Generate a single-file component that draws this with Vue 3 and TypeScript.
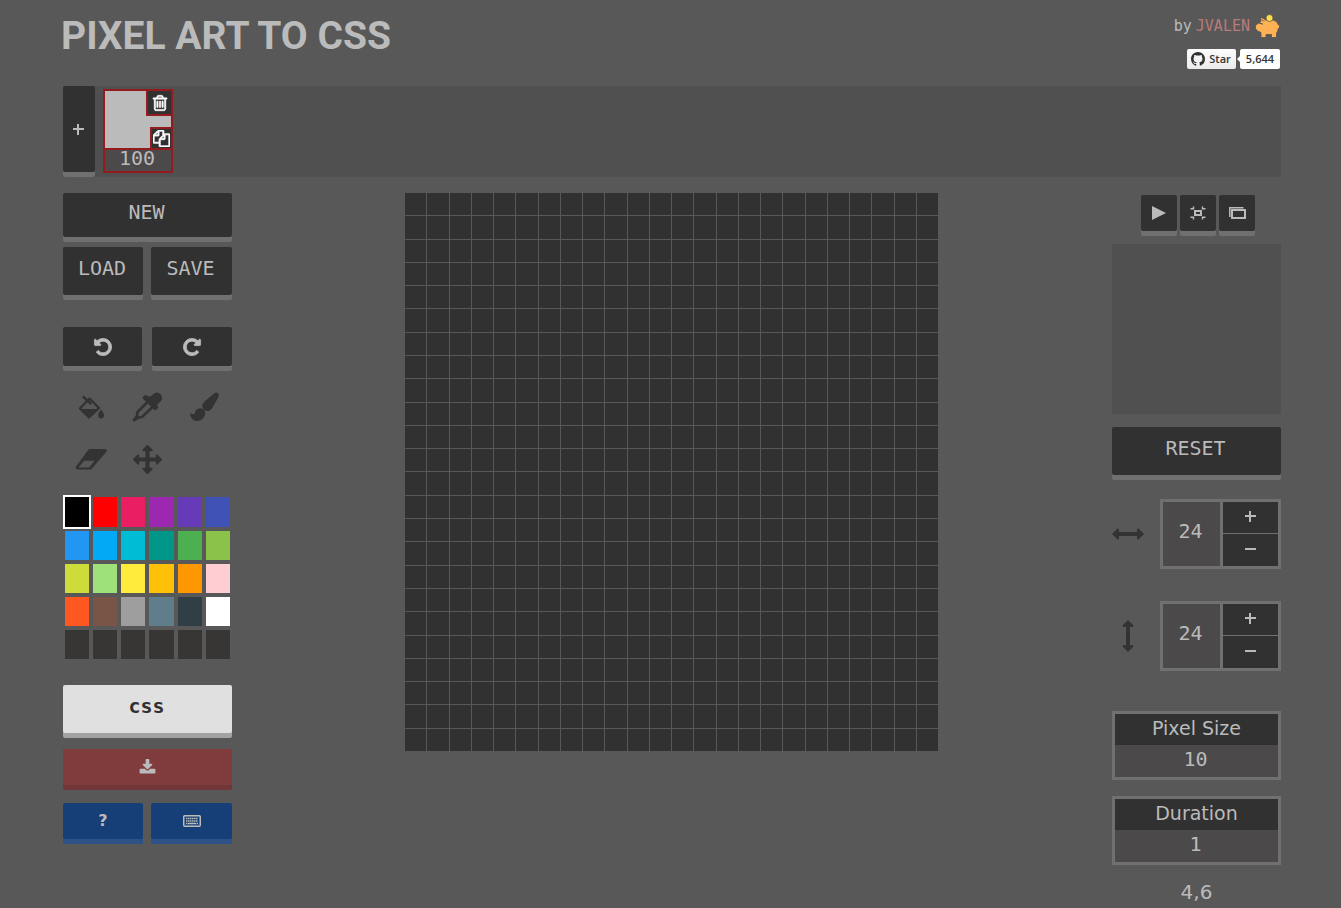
<script setup lang="ts">
import { ref } from 'vue'

const palette: string[] = [
  '#000000', '#ff0000', '#e91e63', '#9c27b0', '#673ab7', '#3f51b5',
  '#2196f3', '#03a9f4', '#00bcd4', '#009688', '#4caf50', '#8bc34a',
  '#cddc39', '#9ee07a', '#ffeb3b', '#ffc107', '#ff9800', '#ffcdd2',
  '#ff5722', '#795548', '#9e9e9e', '#607d8b', '#303f46', '#ffffff',
  '#383535', '#383535', '#383535', '#383535', '#383535', '#383535',
]
const selected = ref(0)
const columns = ref(24)
const rows = ref(24)
const pixelSize = ref('10')
const duration = ref('1')
const interval = ref('100')
</script>

<template>
  <div class="page">
    <header class="header">
      <h1>PIXEL ART TO CSS</h1>
      <div class="credits">
        <p class="author">
          <span>by</span>
          <a href="#jvalen">JVALEN</a>
          <svg class="piggy" viewBox="0 0 26 24" aria-hidden="true">
            <path d="M1.500 11.500L4 9.500 7 7.500 6.500 3.500Q10 4 11.500 6H19Q23.500 7 24.300 11l1.200-.8V14l-1.300.5q-.2 3-1.700 4.500V23.500H17.500V20.500H12V23.500H7V18.500L3.500 17 1.500 14.500z" fill="#ffb156" stroke="#4c4c4c" stroke-width="0.700" />
            <path d="M5 9l4 1.200M8 5.500l2 2" stroke="#4c4c4c" stroke-width="1" fill="none" />
            <circle cx="15.500" cy="4" r="3.500" fill="#ffdc4a" stroke="#4c4c4c" stroke-width="0.700" />
          </svg>
        </p>
        <div class="github">
          <a class="star" href="#star">
            <svg viewBox="0 0 16 16" aria-hidden="true"><path fill="#333" d="M8 0C3.580 0 0 3.580 0 8c0 3.540 2.290 6.530 5.470 7.590.4.070.55-.17.55-.38 0-.19-.01-.82-.01-1.490-2.010.37-2.530-.49-2.690-.94-.09-.23-.48-.94-.82-1.130-.28-.15-.68-.52-.01-.53.63-.01 1.080.58 1.230.82.72 1.210 1.870.87 2.330.66.07-.52.28-.87.51-1.070-1.780-.2-3.640-.89-3.640-3.950 0-.87.31-1.590.82-2.150-.08-.2-.36-1.020.08-2.120 0 0 .67-.21 2.200.82.64-.18 1.320-.27 2-.27.68 0 1.360.09 2 .27 1.530-1.040 2.200-.82 2.200-.82.44 1.100.16 1.920.08 2.120.51.56.82 1.270.82 2.150 0 3.070-1.870 3.750-3.650 3.950.29.25.54.73.54 1.480 0 1.070-.01 1.930-.01 2.200 0 .21.15.46.55.38A8.013 8.013 0 0016 8c0-4.420-3.580-8-8-8z" /></svg>
            Star
          </a>
          <a class="count" href="#stargazers">5,644</a>
        </div>
      </div>
    </header>

    <section class="frames" aria-label="Frames">
      <button class="btn add" type="button" aria-label="Add frame">
        <svg width="11" height="11" viewBox="0 0 11 11"><path d="M5 0v11M0 5h11" stroke="currentColor" stroke-width="2" /></svg>
      </button>
      <div class="frame">
        <div class="thumb">
          <button class="mini trash" type="button" aria-label="Delete frame">
            <svg width="18" height="18" viewBox="0 0 1792 1792"><path fill="#fff" stroke="#fff" stroke-width="60" d="M704 736v576q0 14-9 23t-23 9h-64q-14 0-23-9t-9-23v-576q0-14 9-23t23-9h64q14 0 23 9t9 23zm256 0v576q0 14-9 23t-23 9h-64q-14 0-23-9t-9-23v-576q0-14 9-23t23-9h64q14 0 23 9t9 23zm256 0v576q0 14-9 23t-23 9h-64q-14 0-23-9t-9-23v-576q0-14 9-23t23-9h64q14 0 23 9t9 23zm128 724v-948h-896v948q0 22 7 40.500t14.500 27 10.500 8.500h832q3 0 10.500-8.500t14.500-27 7-40.500zm-672-1076h448l-48-117q-7-9-17-11h-317q-10 2-17 11zm928 32v64q0 14-9 23t-23 9h-96v948q0 83-47 143.500t-113 60.500h-832q-66 0-113-58.500t-47-141.500v-952h-96q-14 0-23-9t-9-23v-64q0-14 9-23t23-9h309l70-167q15-37 54-63t79-26h320q40 0 79 26t54 63l70 167h309q14 0 23 9t9 23z" /></svg>
          </button>
          <button class="mini copy" type="button" aria-label="Duplicate frame">
            <svg width="17" height="17" viewBox="0 0 1792 1792"><path fill="#fff" stroke="#fff" stroke-width="80" d="M1696 384q40 0 68 28t28 68v1216q0 40-28 68t-68 28h-960q-40 0-68-28t-28-68v-288h-544q-40 0-68-28t-28-68v-672q0-40 20-88t48-76l408-408q28-28 76-48t88-20h416q40 0 68 28t28 68v328q68-40 128-40h416zm-544 213l-299 299h299v-299zm-640-384l-299 299h299v-299zm196 647l316-316v-416h-384v416q0 40-28 68t-68 28h-416v640h512v-256q0-40 20-88t48-76zm956 804v-1152h-384v416q0 40-28 68t-68 28h-416v640h896z" /></svg>
          </button>
        </div>
        <input v-model="interval" class="interval" type="text" aria-label="Frame interval" />
      </div>
    </section>

    <main class="workspace">
      <aside class="side">
        <button class="btn new" type="button">NEW</button>
        <div class="pair load-save">
          <button class="btn" type="button">LOAD</button>
          <button class="btn" type="button">SAVE</button>
        </div>
        <div class="pair history">
          <button class="btn" type="button" aria-label="Undo">
            <svg width="20" height="20" viewBox="0 0 1792 1792"><path fill="currentColor" stroke="currentColor" stroke-width="70" d="M1664 896q0 156-61 298t-164 245-245 164-298 61q-172 0-327-72.500t-264-204.500q-7-10-6.500-22.500t8.500-20.500l137-138q10-9 25-9 16 2 23 12 73 95 179 147t225 52q104 0 198.500-40.500t163.500-109.500 109.500-163.500 40.500-198.500-40.500-198.500-109.500-163.500-163.500-109.500-198.500-40.500q-98 0-188 35.500t-160 101.500l137 138q31 30 14 69-17 40-59 40h-448q-26 0-45-19t-19-45v-448q0-42 40-59 39-17 69 14l130 129q107-101 244.500-156.500t284.500-55.500q156 0 298 61t245 164 164 245 61 298z" /></svg>
          </button>
          <button class="btn" type="button" aria-label="Redo">
            <svg width="20" height="20" viewBox="0 0 1792 1792"><path transform="translate(1792 0) scale(-1 1)" fill="currentColor" stroke="currentColor" stroke-width="70" d="M1664 896q0 156-61 298t-164 245-245 164-298 61q-172 0-327-72.500t-264-204.500q-7-10-6.500-22.500t8.500-20.500l137-138q10-9 25-9 16 2 23 12 73 95 179 147t225 52q104 0 198.500-40.500t163.500-109.500 109.500-163.500 40.500-198.500-40.500-198.500-109.500-163.500-163.500-109.500-198.500-40.500q-98 0-188 35.500t-160 101.500l137 138q31 30 14 69-17 40-59 40h-448q-26 0-45-19t-19-45v-448q0-42 40-59 39-17 69 14l130 129q107-101 244.500-156.500t284.500-55.500q156 0 298 61t245 164 164 245 61 298z" /></svg>
          </button>
        </div>

        <div class="tools">
          <button type="button" aria-label="Paint bucket">
            <svg width="32" height="32" viewBox="0 0 32 32">
              <path fill="none" stroke="#333" stroke-width="2.400" stroke-linejoin="round" stroke-linecap="round" d="M8.500 6L15.500 12.500M14.500 7.500L24 17 14 26.500 5 17.500z" />
              <path fill="#333" d="M5 18H23L14 27z" />
              <path fill="#333" d="M26 18.500q3.200 4 3.200 5.800a3 3 0 0 1-6.200 0q0-1.800 3-5.800z" />
            </svg>
          </button>
          <button type="button" aria-label="Eyedropper">
            <svg width="32" height="32" viewBox="0 0 32 32">
              <path fill="#333" d="M20.500 4.800Q24.500 0 28.500 2.200q4.800 3.600 1 8.300l-3.600 3.500 1 1.300q.7 1-.4 2.200l-1.300 1.300q-1 .8-2 0L12 7.800q-.8-1 0-2l1.800-1.500q1-.8 2 0l1.600 1.500z" />
              <path fill="none" stroke="#333" stroke-width="2.600" stroke-linejoin="round" d="M16.500 11L6.500 21 6 25 3 29 7.500 26.500 11 26 21.500 16" />
              <path fill="#333" d="M2 28.500L5.500 24 8.500 27 3.500 30.500Q1.500 31 2 28.500z" />
            </svg>
          </button>
          <button type="button" aria-label="Brush">
            <svg width="32" height="32" viewBox="0 0 32 32">
              <path fill="#333" d="M14.300 15.500Q14 12.500 17 10L26 2.500Q28.500.8 30.200 2.300 31.500 3.800 30.300 6.500L24.500 16.500Q22.500 20 19.500 20 15 20 14.300 15.500z" />
              <path fill="#333" d="M2 22q1.800 1.500 4 1.300 1-.3 1.200-2.300.8-3 4.500-3.800 4 .3 5.300 3.500.8 4-2.500 7.200Q11.500 30.500 7 29.800 2.500 28.500 2 22z" />
            </svg>
          </button>
          <button type="button" aria-label="Eraser">
            <svg width="32" height="32" viewBox="0 0 32 32">
              <path fill="#333" fill-rule="evenodd" d="M15.500 6H30Q32.300 6.200 31.600 8.600L17.500 25Q16.500 26.500 14.500 26.500H2.500Q0 26 .8 23.700L13 7.300Q14 6 15.500 6zM9.300 17.800L3.500 24.600H14.200L19.500 17.800z" />
            </svg>
          </button>
          <button type="button" aria-label="Move">
            <svg width="29" height="29" viewBox="0 0 1792 1792"><path fill="#333" d="M1792 896q0 26-19 45l-256 256q-19 19-45 19t-45-19-19-45v-128h-384v384h128q26 0 45 19t19 45-19 45l-256 256q-19 19-45 19t-45-19l-256-256q-19-19-19-45t19-45 45-19h128v-384h-384v128q0 26-19 45t-45 19-45-19l-256-256q-19-19-19-45t19-45l256-256q19-19 45-19t45 19 19 45v128h384v-384h-128q-26 0-45-19t-19-45 19-45l256-256q19-19 45-19t45 19l256 256q19 19 19 45t-19 45-45 19h-128v384h384v-128q0-26 19-45t45-19 45 19l256 256q19 19 19 45z" /></svg>
          </button>
        </div>

        <div class="palette">
          <button
            v-for="(color, i) in palette"
            :key="i"
            type="button"
            :class="{ selected: i === selected }"
            :style="{ backgroundColor: color }"
            :aria-label="'Color ' + (i + 1)"
            @click="selected = i"
          ></button>
        </div>

        <button class="btn css" type="button">css</button>
        <button class="btn download" type="button" aria-label="Download">
          <svg width="17" height="17" viewBox="0 0 1792 1792"><path fill="currentColor" d="M1728 1120v320q0 40-28 68t-68 28h-1472q-40 0-68-28t-28-68v-320q0-40 28-68t68-28h465l135 136q58 56 136 56t136-56l136-136h464q40 0 68 28t28 68zm-325-569q17 41-14 70l-448 448q-18 19-45 19t-45-19l-448-448q-31-29-14-70 17-39 59-39h256v-448q0-26 19-45t45-19h256q26 0 45 19t19 45v448h256q42 0 59 39z" /></svg>
        </button>
        <div class="pair help">
          <button class="btn" type="button">?</button>
          <button class="btn" type="button" aria-label="Keyboard shortcuts">
            <svg width="18" height="12" viewBox="0 0 18 12">
              <rect x="0.750" y="0.750" width="16.500" height="10.500" rx="1" fill="none" stroke="currentColor" stroke-width="1.500" />
              <path d="M3 3.500h12M3 6h12" stroke="currentColor" stroke-width="1.500" stroke-dasharray="1.500 0.500" />
              <path d="M3 8.500h1.500M5 8.500h8M13.500 8.500h1.500" stroke="currentColor" stroke-width="1.500" />
            </svg>
          </button>
        </div>
      </aside>

      <div class="board-area">
        <div class="board">
          <div v-for="n in 576" :key="n" class="cell"></div>
        </div>
      </div>

      <aside class="side">
        <div class="preview-controls">
          <button class="btn" type="button" aria-label="Play">
            <svg width="16" height="16" viewBox="0 0 16 16"><path fill="currentColor" d="M1 1L15 8 1 15z" /></svg>
          </button>
          <button class="btn" type="button" aria-label="Shrink preview">
            <svg width="16" height="16" viewBox="0 0 16 16" fill="none" stroke="currentColor">
              <rect x="5" y="6" width="6" height="4" stroke-width="2" />
              <path stroke-width="1.500" d="M.5 3.700H3.500V1.500M15.500 3.700H12.500V1.500M.5 12.300H3.500V14.500M15.500 12.300H12.500V14.500" />
            </svg>
          </button>
          <button class="btn" type="button" aria-label="Show frames">
            <svg width="18" height="14" viewBox="0 0 18 14" fill="none" stroke="currentColor">
              <rect x="4" y="4" width="13" height="8" stroke-width="2" />
              <path stroke-width="1.500" d="M1.800 11V1.800H15.500" />
            </svg>
          </button>
        </div>
        <div class="preview"></div>
        <button class="btn reset" type="button">RESET</button>

        <div class="dimension">
          <svg width="32" height="12" viewBox="0 0 32 12" aria-hidden="true"><path fill="#333" d="M0 6L5.500.6Q7 0 7 2V4H25V2Q25 0 26.500.6L32 6 26.500 11.400Q25 12 25 10V8H7V10Q7 12 5.500 11.400z" /></svg>
          <div class="stepper">
            <input v-model="columns" type="text" aria-label="Columns" />
            <div class="steps">
              <button type="button" aria-label="Add column" @click="columns++"><svg width="11" height="11" viewBox="0 0 11 11"><path d="M5 0v11M0 5h11" stroke="currentColor" stroke-width="2" /></svg></button>
              <button type="button" aria-label="Remove column" @click="columns--"><svg width="11" height="11" viewBox="0 0 11 11"><path d="M0 6h11" stroke="currentColor" stroke-width="2" /></svg></button>
            </div>
          </div>
        </div>
        <div class="dimension">
          <svg width="32" height="32" viewBox="0 0 32 32" aria-hidden="true"><path fill="#333" d="M16 0L21.400 5.500Q22 7 20 7H18V25H20Q22 25 21.400 26.500L16 32 10.600 26.500Q10 25 12 25H14V7H12Q10 7 10.600 5.500z" /></svg>
          <div class="stepper">
            <input v-model="rows" type="text" aria-label="Rows" />
            <div class="steps">
              <button type="button" aria-label="Add row" @click="rows++"><svg width="11" height="11" viewBox="0 0 11 11"><path d="M5 0v11M0 5h11" stroke="currentColor" stroke-width="2" /></svg></button>
              <button type="button" aria-label="Remove row" @click="rows--"><svg width="11" height="11" viewBox="0 0 11 11"><path d="M0 6h11" stroke="currentColor" stroke-width="2" /></svg></button>
            </div>
          </div>
        </div>

        <div class="field pixel-size">
          <label for="pixel-size">Pixel Size</label>
          <input id="pixel-size" v-model="pixelSize" type="text" />
        </div>
        <div class="field">
          <label for="duration">Duration</label>
          <input id="duration" v-model="duration" type="text" />
        </div>
        <p class="position">4,6</p>
      </aside>
    </main>
  </div>
</template>

<style>
body {
  margin: 0;
  background: #585858;
}
</style>

<style scoped>
.page {
  box-sizing: border-box;
  height: 100vh;
  overflow: hidden;
  padding: 0 60px 0 63px;
  background: #585858;
  color: #bbb;
  font-family: "DejaVu Sans Mono", "Liberation Mono", monospace;
  font-size: 20px;
  line-height: 24px;
}
button,
input {
  box-sizing: border-box;
  margin: 0;
  padding: 0;
  border: 0;
  border-radius: 0;
  color: inherit;
  font: inherit;
}
button {
  display: flex;
  align-items: center;
  justify-content: center;
  background: none;
  cursor: pointer;
}
input {
  min-width: 0;
  width: 100%;
  padding-right: 2px;
  background: #4b4949;
  text-align: center;
}
svg {
  display: block;
  flex: none;
}
a {
  text-decoration: none;
}
p {
  margin: 0;
}

.header {
  display: flex;
  justify-content: space-between;
  height: 86px;
}
h1 {
  margin: 13px 0 0 -2px;
  font-family: Roboto, "Liberation Sans", sans-serif;
  font-size: 39px;
  font-weight: 700;
  line-height: 46px;
}
.credits {
  display: flex;
  flex-direction: column;
  align-items: flex-end;
  padding: 13px 1px 0 0;
}
.author {
  display: flex;
  align-items: center;
  gap: 4px;
  height: 26px;
  font-size: 15px;
}
.author a {
  color: #b87b7b;
}
.piggy {
  width: 26px;
  height: 24px;
}
.github {
  display: flex;
  gap: 4px;
  margin-top: 10px;
  font-family: "Open Sans", "Noto Sans", sans-serif;
  font-size: 11px;
  font-weight: 600;
  line-height: 20px;
}
.github a {
  display: flex;
  align-items: center;
  height: 20px;
  border-radius: 2px;
  color: #333;
}
.star {
  gap: 4px;
  padding: 0 5px 0 4px;
  background: linear-gradient(#fcfcfc, #ebebeb);
}
.star svg {
  width: 14px;
  height: 14px;
}
.count {
  position: relative;
  padding: 0 6px;
  background: #fff;
}
.count::before {
  content: "";
  position: absolute;
  top: 7px;
  left: -3px;
  border: 3px solid transparent;
  border-left-width: 0;
  border-right-color: #fff;
}

.btn {
  padding-right: 2px;
  border-radius: 2px;
  background: #313131;
  box-shadow: 0 5px 0 #707070;
}

.frames {
  display: flex;
  gap: 8px;
  height: 91px;
  background: #505050;
}
.add {
  width: 32px;
  height: 86px;
}
.frame {
  box-sizing: border-box;
  display: flex;
  flex-direction: column;
  width: 70px;
  height: 84px;
  margin-top: 3px;
  border: 2px solid #931a1d;
}
.thumb {
  position: relative;
  height: 57px;
  background: #bbb;
}
.mini {
  position: absolute;
  right: 0;
  border: 0 solid #931a1d;
  background: #313131;
}
.trash {
  top: 0;
  width: 25px;
  height: 25px;
  border-width: 0 0 2px 2px;
}
.copy {
  bottom: 0;
  width: 21px;
  height: 21px;
  border-width: 2px 0 0 2px;
}
.interval {
  height: 23px;
  padding-bottom: 5px;
  border-top: 2px solid #931a1d;
}

.workspace {
  display: grid;
  grid-template-columns: 169px minmax(0, 1fr) 169px;
  margin-top: 16px;
}
.side {
  display: flex;
  flex-direction: column;
}
.pair {
  display: grid;
  grid-template-columns: 80fr 81fr;
  gap: 8px;
}
.new {
  height: 44px;
  padding-bottom: 6px;
}
.load-save {
  margin-top: 10px;
}
.load-save .btn {
  height: 48px;
  padding-bottom: 6px;
}
.history {
  grid-template-columns: 79fr 80fr;
  gap: 10px;
  margin-top: 32px;
}
.history .btn {
  height: 39px;
  padding-right: 0;
}
.tools {
  display: grid;
  grid-template-columns: repeat(3, 1fr);
  grid-auto-rows: 52px;
  margin-top: 15px;
}
.palette {
  display: grid;
  grid-template-columns: repeat(6, 1fr);
  grid-template-rows: 30px repeat(4, 29px);
  gap: 4px;
  margin: 12px 2px 0;
}
.palette .selected {
  box-shadow: 0 0 0 2px #fff;
}
.css {
  height: 48px;
  margin-top: 26px;
  padding-bottom: 6px;
  background: #e0e0e0;
  box-shadow: 0 5px 0 #a3a3a3;
  color: #313131;
  font-weight: 700;
}
.download {
  height: 36px;
  margin-top: 16px;
  padding-right: 0;
  background: #803b3d;
  box-shadow: 0 5px 0 #733638;
}
.help {
  margin-top: 18px;
}
.help .btn {
  height: 36px;
  padding-right: 0;
  background: #163f77;
  box-shadow: 0 5px 0 #2f5286;
  font-family: "DejaVu Sans", "Liberation Sans", sans-serif;
  font-size: 16px;
  font-weight: 700;
}

.board-area {
  padding: 0 174px 0 173px;
}
.board {
  display: grid;
  grid-template: repeat(24, 1fr) / repeat(24, 1fr);
  gap: 1px;
  aspect-ratio: 533 / 558;
}
.cell {
  background: #313131;
}

.preview-controls {
  display: flex;
  justify-content: center;
  gap: 3px;
  padding: 2px 0 0 3px;
}
.preview-controls .btn {
  width: 36px;
  height: 36px;
  padding-right: 0;
}
.preview {
  height: 170px;
  margin-top: 13px;
  background: #505050;
}
.reset {
  height: 48px;
  margin-top: 13px;
  padding-bottom: 6px;
}
.dimension {
  display: flex;
  align-items: center;
  justify-content: space-between;
  margin-top: 24px;
}
.dimension + .dimension {
  margin-top: 32px;
}
.stepper {
  box-sizing: border-box;
  display: grid;
  grid-template-columns: 57px 55px;
  gap: 3px;
  width: 121px;
  height: 70px;
  border: 3px solid #707070;
  background: #707070;
}
.stepper input {
  padding-bottom: 6px;
}
.steps {
  display: grid;
  grid-template-rows: 31px 32px;
  gap: 1px;
}
.steps button {
  padding-bottom: 3px;
  background: #313131;
}
.field {
  display: flex;
  flex-direction: column;
  margin-top: 16px;
  border: 3px solid #707070;
}
.pixel-size {
  margin-top: 40px;
}
.field label {
  height: 31px;
  background: #313131;
  font-family: "DejaVu Sans", "Liberation Sans", sans-serif;
  font-size: 19px;
  line-height: 28px;
  text-align: center;
}
.field input {
  height: 32px;
  padding-bottom: 4px;
}
.position {
  margin-top: 15px;
  font-family: "DejaVu Sans", "Liberation Sans", sans-serif;
  text-align: center;
}
</style>
